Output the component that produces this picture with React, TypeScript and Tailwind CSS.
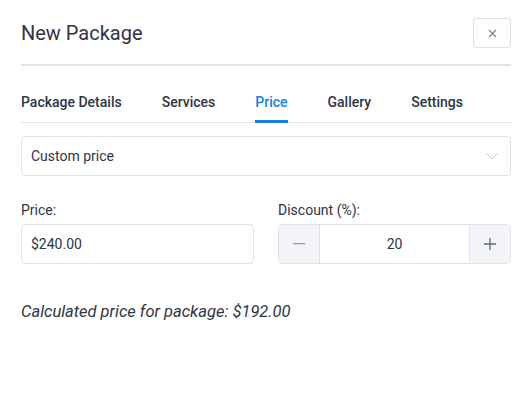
import React, { useState } from "react";

const tabs = ["Package Details", "Services", "Price", "Gallery", "Settings"];

export const NewPackage = () => {
  const [active, setActive] = useState("Price");
  const [price, setPrice] = useState("$240.00");
  const [discount, setDiscount] = useState(20);

  const num = parseFloat(price.replace(/[^0-9.]/g, "")) || 0;
  const calculated = (num * (1 - discount / 100)).toFixed(2);

  return (
    <div className="w-[530px] h-[406px] bg-white pl-[21px] pr-[19px] text-[#2f3542] font-['Roboto',sans-serif]">
      <div className="flex items-center justify-between pt-[18px] pb-[16px] border-b-2 border-[#dfe3e8]">
        <h1 className="text-[20px] leading-[30px] font-normal">New Package</h1>
        <button className="w-[38px] h-[30px] flex items-center justify-center border border-[#dde1e6] rounded-[3px] text-[#7c8695]">
          <svg width="9" height="9" viewBox="0 0 9 9" fill="none" stroke="currentColor" strokeWidth="1.3">
            <path d="M1 1L8 8M8 1L1 8" />
          </svg>
        </button>
      </div>

      <div className="mt-[26px] flex gap-[40px] border-b border-[#e2e6ea]">
        {tabs.map((t) => (
          <button
            key={t}
            onClick={() => setActive(t)}
            className={
              "pb-[8px] -mb-px border-b-[3px] text-[14px] leading-[20px] font-medium " +
              (active === t ? "border-[#1a7ee6] text-[#1a7ee6]" : "border-transparent text-[#2f3542]")
            }
          >
            {t}
          </button>
        ))}
      </div>

      <div className="mt-[13px] h-[40px] border border-[#dfe3e8] rounded-[4px] flex items-center justify-between pl-[9px] pr-[12px]">
        <span className="text-[14px]">Custom price</span>
        <svg width="12" height="7" viewBox="0 0 12 7" fill="none" stroke="#c4cad2" strokeWidth="1">
          <path d="M0.5 0.5L6 6L11.5 0.5" />
        </svg>
      </div>

      <div className="mt-[24px] grid grid-cols-2 gap-x-[24px]">
        <div className="flex flex-col">
          <label className="text-[14px] leading-[20px] mb-[4px]">Price:</label>
          <input
            type="text"
            value={price}
            onChange={(e) => setPrice(e.target.value)}
            className="h-[40px] border border-[#dfe3e8] rounded-[4px] px-[9px] text-[14px] outline-none"
          />
        </div>
        <div className="flex flex-col">
          <label className="text-[14px] leading-[20px] mb-[4px]">Discount (%):</label>
          <div className="h-[40px] border border-[#dfe3e8] rounded-[4px] flex overflow-hidden">
            <button
              onClick={() => setDiscount(Math.max(0, discount - 1))}
              className="w-[41px] bg-[#f2f4f7] border-r border-[#dfe3e8] flex items-center justify-center text-[#8d96a3]"
            >
              <svg width="12" height="2" viewBox="0 0 12 2"><rect width="12" height="1.2" fill="currentColor" /></svg>
            </button>
            <div className="flex-1 flex items-center justify-center text-[14px]">{discount}</div>
            <button
              onClick={() => setDiscount(Math.min(100, discount + 1))}
              className="w-[41px] bg-[#f2f4f7] border-l border-[#dfe3e8] flex items-center justify-center text-[#5f6875]"
            >
              <svg width="12" height="12" viewBox="0 0 12 12" stroke="currentColor" strokeWidth="1.3">
                <path d="M6 0V12M0 6H12" />
              </svg>
            </button>
          </div>
        </div>
      </div>

      <p className="mt-[36px] text-[16.5px] leading-[24px] italic">Calculated price for package: ${calculated}</p>
    </div>
  );
};

export default NewPackage;
